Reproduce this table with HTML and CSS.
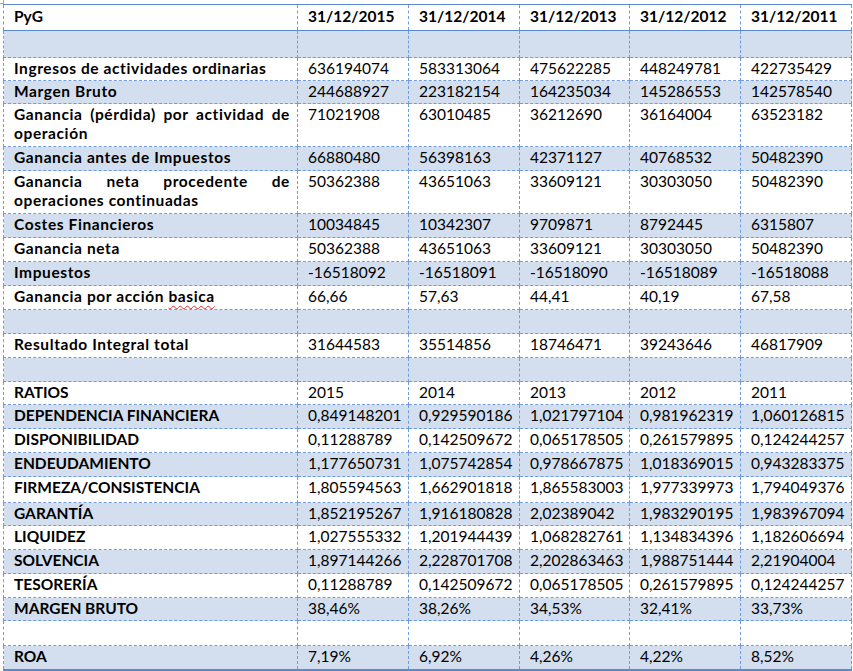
FILE: index.html
```html
<!DOCTYPE html>
<html lang="es">
<head>
<meta charset="utf-8">
<title>PyG</title>
<link rel="stylesheet" href="styles.css">
</head>
<body>
<span class="corner"></span>
<table class="sheet">
  <colgroup>
    <col class="c-label"><col class="c-val"><col class="c-val"><col class="c-val3"><col class="c-val"><col class="c-val">
  </colgroup>
  <tr class="head">
    <th>PyG</th><th>31/12/2015</th><th>31/12/2014</th><th>31/12/2013</th><th>31/12/2012</th><th>31/12/2011</th>
  </tr>
  <tr class="alt first-gap"><th></th><td></td><td></td><td></td><td></td><td></td></tr>
  <tr class="r23 lc"><th>Ingresos de actividades ordinarias</th><td>636194074</td><td>583313064</td><td>475622285</td><td>448249781</td><td>422735429</td></tr>
  <tr class="alt r23 lc"><th>Margen Bruto</th><td>244688927</td><td>223182154</td><td>164235034</td><td>145286553</td><td>142578540</td></tr>
  <tr class="two lc"><th>Ganancia (pérdida) por actividad de operación</th><td>71021908</td><td>63010485</td><td>36212690</td><td>36164004</td><td>63523182</td></tr>
  <tr class="alt lc"><th>Ganancia antes de Impuestos</th><td>66880480</td><td>56398163</td><td>42371127</td><td>40768532</td><td>50482390</td></tr>
  <tr class="two lc"><th>Ganancia neta procedente de operaciones continuadas</th><td>50362388</td><td>43651063</td><td>33609121</td><td>30303050</td><td>50482390</td></tr>
  <tr class="alt lc"><th>Costes Financieros</th><td>10034845</td><td>10342307</td><td>9709871</td><td>8792445</td><td>6315807</td></tr>
  <tr class="lc"><th>Ganancia neta</th><td>50362388</td><td>43651063</td><td>33609121</td><td>30303050</td><td>50482390</td></tr>
  <tr class="alt lc"><th>Impuestos</th><td>-16518092</td><td>-16518091</td><td>-16518090</td><td>-16518089</td><td>-16518088</td></tr>
  <tr class="lc"><th>Ganancia por acción <span class="spell">basica</span></th><td>66,66</td><td>57,63</td><td>44,41</td><td>40,19</td><td>67,58</td></tr>
  <tr class="alt"><th></th><td></td><td></td><td></td><td></td><td></td></tr>
  <tr class="lc"><th>Resultado Integral total</th><td>31644583</td><td>35514856</td><td>18746471</td><td>39243646</td><td>46817909</td></tr>
  <tr class="alt"><th></th><td></td><td></td><td></td><td></td><td></td></tr>
  <tr class="r23"><th>RATIOS</th><td>2015</td><td>2014</td><td>2013</td><td>2012</td><td>2011</td></tr>
  <tr class="alt"><th>DEPENDENCIA FINANCIERA</th><td>0,849148201</td><td>0,929590186</td><td>1,021797104</td><td>0,981962319</td><td>1,060126815</td></tr>
  <tr><th>DISPONIBILIDAD</th><td>0,11288789</td><td>0,142509672</td><td>0,065178505</td><td>0,261579895</td><td>0,124244257</td></tr>
  <tr class="alt"><th>ENDEUDAMIENTO</th><td>1,177650731</td><td>1,075742854</td><td>0,978667875</td><td>1,018369015</td><td>0,943283375</td></tr>
  <tr class="r26"><th>FIRMEZA/CONSISTENCIA</th><td>1,805594563</td><td>1,662901818</td><td>1,865583003</td><td>1,977339973</td><td>1,794049376</td></tr>
  <tr class="alt r23"><th>GARANTÍA</th><td>1,852195267</td><td>1,916180828</td><td>2,02389042</td><td>1,983290195</td><td>1,983967094</td></tr>
  <tr><th>LIQUIDEZ</th><td>1,027555332</td><td>1,201944439</td><td>1,068282761</td><td>1,134834396</td><td>1,182606694</td></tr>
  <tr class="alt"><th>SOLVENCIA</th><td>1,897144266</td><td>2,228701708</td><td>2,202863463</td><td>1,988751444</td><td>2,21904004</td></tr>
  <tr><th>TESORERÍA</th><td>0,11288789</td><td>0,142509672</td><td>0,065178505</td><td>0,261579895</td><td>0,124244257</td></tr>
  <tr class="alt r23"><th>MARGEN BRUTO</th><td>38,46%</td><td>38,26%</td><td>34,53%</td><td>32,41%</td><td>33,73%</td></tr>
  <tr class="r25"><th></th><td></td><td></td><td></td><td></td><td></td></tr>
  <tr class="alt last"><th>ROA</th><td>7,19%</td><td>6,92%</td><td>4,26%</td><td>4,22%</td><td>8,52%</td></tr>
</table>
</body>
</html>
```
FILE: styles.css
```css
html, body {
  margin: 0;
  padding: 0;
  background: #ffffff;
}

body {
  font-family: Lato, "Liberation Sans", sans-serif;
  color: #000000;
}

.corner {
  position: absolute;
  left: 0;
  top: 0;
  width: 3px;
  height: 3px;
  border-right: 1px solid #a6a6a6;
  border-bottom: 1px solid #a6a6a6;
}

.sheet {
  margin: 4px 0 0 3px;
  width: 848px;
  table-layout: fixed;
  border-collapse: collapse;
  font-size: 15.5px;
  line-height: 19px;
}

.c-label { width: 294px; }
.c-val { width: 111px; }
.c-val3 { width: 110px; }

.sheet th,
.sheet td {
  border: 1px dashed #6f9be0;
  padding: 1px 6px 1px 10px;
  vertical-align: top;
  text-align: left;
  white-space: nowrap;
}

.sheet th {
  font-weight: 700;
  text-align: justify;
  white-space: normal;
  padding-right: 7px;
}

.sheet tr.lc th {
  letter-spacing: 0.6px;
}

.sheet tr { height: 24px; }
.sheet tr.r23 { height: 23px; }
.sheet tr.r25 { height: 25px; }
.sheet tr.r26 { height: 26px; }
.sheet tr.two { height: 43px; }

.sheet tr.head { height: 26px; }
.sheet tr.head th {
  border-top: 1px solid #5b8ad0;
  border-bottom: 1px solid #5b8ad0;
  text-align: left;
  padding-top: 2px;
}
.sheet tr.first-gap { height: 27px; }

.sheet tr.last th,
.sheet tr.last td {
  border-bottom: 2px solid #5b8ad0;
}

.sheet tr.alt th,
.sheet tr.alt td {
  background: #d3dfee;
}

.spell {
  text-decoration: underline wavy #e03030;
  text-decoration-thickness: 1px;
  text-underline-offset: 3px;
}
```
